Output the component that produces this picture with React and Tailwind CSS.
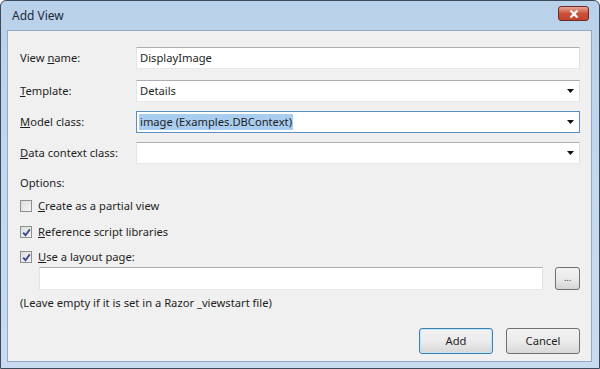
import React from 'react';

const font = { fontFamily: '"Segoe UI", "Noto Sans", "DejaVu Sans", sans-serif' };

const Arrow = () => (
  <svg width="7" height="4" viewBox="0 0 7 4" className="absolute right-[5px] top-1/2 -translate-y-1/2">
    <path d="M0 0 H7 L3.5 4 Z" fill="#111" />
  </svg>
);

const Check = () => (
  <svg width="9" height="9" viewBox="0 0 9 9" className="absolute left-[1px] top-[1px]">
    <path d="M1.2 4.6 L3.5 7.2 L7.8 1.4" fill="none" stroke="#3b4a8f" strokeWidth="1.8" />
  </svg>
);

const Field = ({ label, u, rest, children, className = '' }) => (
  <div className={`flex items-center h-[22px] ${className}`}>
    <div className="w-[116px] text-[11.2px] text-[#1e1e1e]">
      {label}<span className="underline">{u}</span>{rest}
    </div>
    {children}
  </div>
);

const Box = ({ children, select, focus }) => (
  <div
    className={`relative flex-1 h-full bg-white border ${
      focus ? 'border-[#5b8fc2]' : 'border-[#abadb3] border-l-[#e2e3ea] border-r-[#dbdfe6] border-b-[#e3e9ef]'
    } flex items-center pl-[3px] text-[11.2px] text-[#1e1e1e]`}
  >
    {children}
    {select && <Arrow />}
  </div>
);

const CheckRow = ({ checked, u, rest, className = '' }) => (
  <div className={`flex items-center h-[16px] ${className}`}>
    <div className="relative w-[12px] h-[12px] border border-[#8e8f8f] bg-gradient-to-br from-[#dcdcdc] to-[#f6f6f6] mr-[6px]">
      {checked && <Check />}
    </div>
    <span className="text-[11.2px] text-[#1e1e1e]">
      <span className="underline">{u}</span>{rest}
    </span>
  </div>
);

export default function App() {
  return (
    <div style={font} className="w-[600px] h-[369px] flex flex-col bg-gradient-to-b from-[#b9d1ea] via-[#c4d8ee] to-[#c8dbf0] border border-[#3c4a5a] rounded-t-[6px] overflow-hidden">
      <div className="h-[29px] shrink-0 flex items-center justify-between pl-[11px] pr-[10px]">
        <span className="text-[12px] text-[#1e2a3a]">Add View</span>
        <div className="w-[31px] h-[15px] mb-[4px] rounded-[3px] border border-[#6a2a22] bg-gradient-to-b from-[#e8a597] via-[#c9523b] to-[#c2442d] flex items-center justify-center">
          <svg width="10" height="8" viewBox="0 0 10 8">
            <path d="M1.5 0.5 L8.5 7.5 M8.5 0.5 L1.5 7.5" stroke="#fff" strokeWidth="2.2" />
          </svg>
        </div>
      </div>
      <div className="flex-1 ml-[6px] mr-[7px] mb-[6px] bg-[#f0f0f0] border border-[#93aac5] flex flex-col pl-[12px] pr-[11px]">
        <Field label="View " u="n" rest="ame:" className="mt-[16px]">
          <Box>DisplayImage</Box>
        </Field>
        <Field label="" u="T" rest="emplate:" className="mt-[11px]">
          <Box select>Details</Box>
        </Field>
        <Field label="" u="M" rest="odel class:" className="mt-[9px]">
          <Box select focus>
            <span className="bg-[#a9cdf0] px-[1px] -ml-[1px]">image (Examples.DBContext)</span>
          </Box>
        </Field>
        <Field label="" u="D" rest="ata context class:" className="mt-[9px]">
          <Box select />
        </Field>
        <div className="mt-[11px] h-[16px] flex items-center text-[11.2px] text-[#1e1e1e]">Options:</div>
        <CheckRow u="C" rest="reate as a partial view" className="mt-[7px]" />
        <CheckRow checked u="R" rest="eference script libraries" className="mt-[10px]" />
        <CheckRow checked u="U" rest="se a layout page:" className="mt-[9px]" />
        <div className="flex items-center mt-[2px] pl-[19px] h-[23px]">
          <div className="flex-1 h-full bg-white border border-[#abadb3] border-l-[#e2e3ea] border-r-[#dbdfe6] border-b-[#e3e9ef]" />
          <button className="ml-[12px] w-[25px] h-[23px] rounded-[3px] border border-[#707070] bg-gradient-to-b from-[#f2f2f2] via-[#ebebeb] to-[#d5d5d5] text-[9px] leading-none text-[#333] pb-[2px]">
            ...
          </button>
        </div>
        <div className="mt-[5px] h-[16px] flex items-center text-[11.2px] text-[#1e1e1e]">
          (Leave empty if it is set in a Razor _viewstart file)
        </div>
        <div className="mt-[17px] flex justify-end gap-[13px]">
          <button className="w-[74px] h-[26px] rounded-[3px] border border-[#3c7fb1] shadow-[inset_0_0_0_1px_#c4e5f6] bg-gradient-to-b from-[#f2f2f2] via-[#ebebeb] to-[#d8d8d8] text-[11.2px] text-[#1e1e1e]">
            Add
          </button>
          <button className="w-[74px] h-[26px] rounded-[3px] border border-[#707070] bg-gradient-to-b from-[#f2f2f2] via-[#ebebeb] to-[#d8d8d8] text-[11.2px] text-[#1e1e1e]">
            Cancel
          </button>
        </div>
      </div>
    </div>
  );
}
